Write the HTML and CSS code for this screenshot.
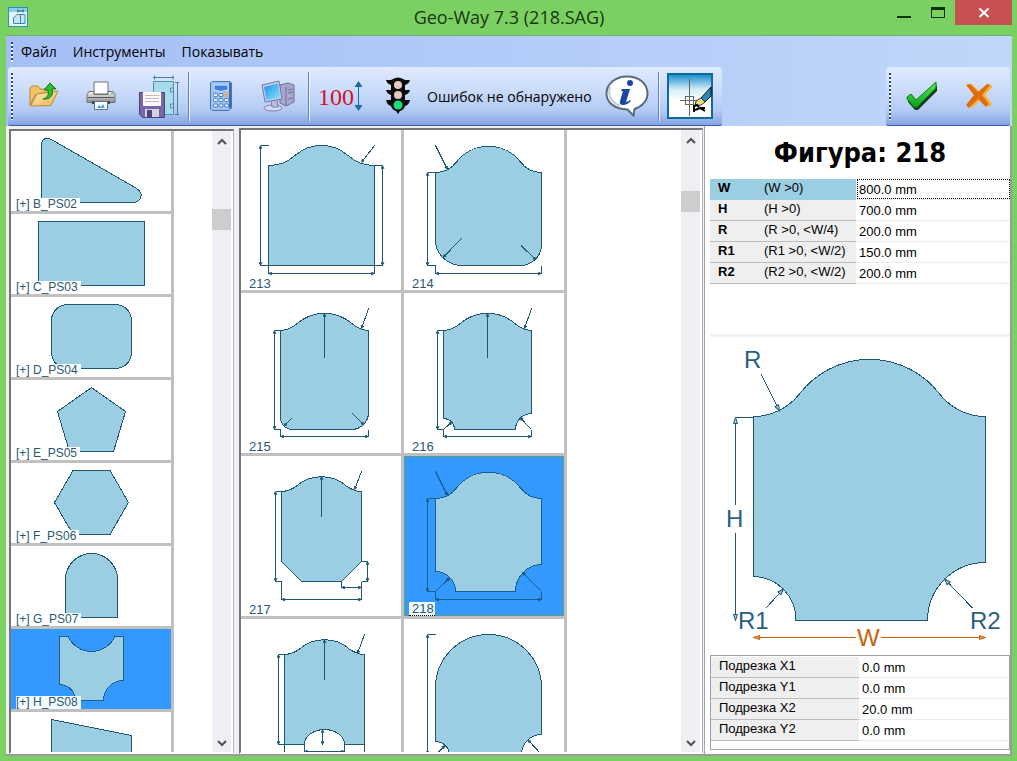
FILE: index.html
```html
<!DOCTYPE html>
<html lang="ru">
<head>
    <meta charset="UTF-8">
    <meta name="viewport" content="width=device-width, initial-scale=1.0">
    <title>Geo-Way 7.3 (218.SAG)</title>
    <link rel="stylesheet" href="styles.css">
</head>
<body>
    <svg class="defs" width="0" height="0" aria-hidden="true">
        <defs>
            <marker id="arrow" viewBox="0 0 6 6" refX="5" refY="3" markerWidth="4" markerHeight="4" markerUnits="userSpaceOnUse" orient="auto-start-reverse">
                <path d="M0 0L6 3L0 6Z" fill="#1f5873" stroke="none"/>
            </marker>
            <marker id="arrow-open" viewBox="0 0 8 6" refX="7" refY="3" markerWidth="8" markerHeight="6" markerUnits="userSpaceOnUse" orient="auto-start-reverse">
                <path d="M1 1L7 3L1 5Z" fill="#9bcde3" stroke="#1f5873"/>
            </marker>
            <marker id="arrow-orange" viewBox="0 0 8 6" refX="7" refY="3" markerWidth="8" markerHeight="6" markerUnits="userSpaceOnUse" orient="auto-start-reverse">
                <path d="M1 1L7 3L1 5Z" fill="#e79a55" stroke="#c8640f"/>
            </marker>
            <linearGradient id="folder" x1="0" y1="0" x2="1" y2="1">
                <stop offset="0" stop-color="#fff0b8"/>
                <stop offset="1" stop-color="#e9b04f"/>
            </linearGradient>
            <linearGradient id="screen" x1="0" y1="0" x2="1" y2="1">
                <stop offset="0" stop-color="#1f8fe8"/>
                <stop offset="1" stop-color="#8be4fb"/>
            </linearGradient>
            <linearGradient id="metal" x1="0" y1="0" x2="0" y2="1">
                <stop offset="0" stop-color="#f2f2f2"/>
                <stop offset="1" stop-color="#8d8d92"/>
            </linearGradient>
            <linearGradient id="sky" x1="0" y1="0" x2="0" y2="1">
                <stop offset="0" stop-color="#1089c8"/>
                <stop offset="0.35" stop-color="#d3edf8"/>
                <stop offset="0.6" stop-color="#ffffff"/>
            </linearGradient>
            <linearGradient id="green" x1="0" y1="0" x2="0" y2="1">
                <stop offset="0" stop-color="#5fe65a"/>
                <stop offset="1" stop-color="#09a21c"/>
            </linearGradient>
        </defs>
    </svg>

    <div class="window">
        <header class="titlebar">
            <svg class="app-icon" width="20" height="20" viewBox="0 0 20 20">
                <rect x="0.5" y="0.5" width="19" height="19" fill="#e3f5fc" stroke="#2a8fc4"/>
                <path d="M1 1h18v4H1z" fill="#8accea"/>
                <path d="M9 4h7M10 2.500v3M15 2.500v3" stroke="#2c6d94" fill="none"/>
                <path d="M5.500 16.500V11L9 7.500h8v9z" fill="#c4e7f5" stroke="#3f88ac"/>
                <path d="M12.500 8v8" fill="none" stroke="#3f88ac"/>
            </svg>
            <h1 class="title">Geo-Way 7.3 (218.SAG)</h1>
            <div class="window-buttons">
                <button class="win-btn" aria-label="Свернуть">
                    <svg width="16" height="14" viewBox="0 0 16 14"><path d="M1 11h14" stroke="#14300d" stroke-width="2"/></svg>
                </button>
                <button class="win-btn" aria-label="Развернуть">
                    <svg width="16" height="14" viewBox="0 0 16 14"><path d="M1 1h14v3H1z" fill="#14300d"/><rect x="1.500" y="1.500" width="13" height="10" fill="none" stroke="#14300d"/></svg>
                </button>
                <button class="win-btn close" aria-label="Закрыть">
                    <svg width="12" height="12" viewBox="0 0 12 12"><path d="M1.500 1.500l9 8.500M10.500 1.500l-9 8.500" stroke="#fff" stroke-width="2"/></svg>
                </button>
            </div>
        </header>

        <div class="client">
            <nav class="menubar">
                <span class="grip"></span>
                <button class="menu-item">Файл</button>
                <button class="menu-item">Инструменты</button>
                <button class="menu-item">Показывать</button>
            </nav>

            <div class="toolbars">
                <div class="toolbar">
                    <span class="grip"></span>
                    <button class="tool" aria-label="Открыть">
                        <svg width="32" height="28" viewBox="0 0 32 28">
                            <path d="M2 23V6l2-2h6l2 3h8v3l-13 3z" fill="#f0c367" stroke="#b98a35"/>
                            <path d="M2.500 24L9 12l21-3-7 14.500z" fill="url(#folder)" stroke="#bd8c37"/>
                            <path d="M15 17c5-1 6-5 5-9h-4l6-7 6 6h-4c2 6-2 11-9 10z" fill="#2ebd2b" stroke="#0f7a1d"/>
                        </svg>
                    </button>
                    <button class="tool" aria-label="Печать">
                        <svg width="32" height="30" viewBox="0 0 32 30">
                            <path d="M9 1h14v12H9z" fill="#fff" stroke="#777"/>
                            <path d="M4 10.500h5v3h14v-3h5l2 3v8H2v-8z" fill="url(#metal)" stroke="#6e6e76"/>
                            <path d="M3 16.500h26" stroke="#5a5a60"/>
                            <path d="M7 20h18v3H7z" fill="#44444c"/>
                            <path d="M9.500 20.500h13v8h-13z" fill="#fff" stroke="#5c7388"/>
                            <path d="M12 27l2-3 2 2 2-3 2 4z" fill="#4ea3dd"/>
                            <path d="M26 12.500h2" stroke="#3fae3f"/>
                        </svg>
                    </button>
                    <button class="tool" aria-label="Сохранить">
                        <svg width="42" height="44" viewBox="0 0 42 44">
                            <path d="M16.500 7.500h20v33h-20z" fill="#a9dcea" stroke="#4a94ae"/>
                            <path d="M36.500 14h-3v4h3M36.500 30h-3v4h3" fill="none" stroke="#4a94ae"/>
                            <path d="M16 3.500h21M17.500 1.500v4M36 1.500v4M40.500 8v32M38 8.500h4M38 40.500h4" stroke="#4b7e9b" fill="none"/>
                            <path d="M2.500 18.500h25v25h-22l-3-3z" fill="#7668a8" stroke="#4e417e"/>
                            <path d="M6 18h18v14H6z" fill="#fbf9fb"/>
                            <path d="M8 21.500h14M8 24.500h14M8 27.500h14" stroke="#cbb9b4"/>
                            <path d="M8 35h14v8H8z" fill="#d4d2dc"/>
                            <path d="M10 36h5v7h-5z" fill="#4e417e"/>
                        </svg>
                    </button>
                    <span class="sep"></span>
                    <button class="tool" aria-label="Калькулятор">
                        <svg width="24" height="32" viewBox="0 0 24 32">
                            <path d="M3 1.500h18l1.500 1.500v25L20 30.500H3L1.500 29V3z" fill="#9cc2f2" stroke="#4277be"/>
                            <path d="M21 2.500v26" stroke="#3c6bb0" stroke-width="2"/>
                            <path d="M5 5h14v5q-7 3-14 0z" fill="#3f81dc" stroke="#d8e9ff"/>
                            <g fill="#e6f1ff" stroke="#4c7ec4">
                                <rect x="4.500" y="13.500" width="4" height="3" rx="1"/><rect x="10" y="13.500" width="4" height="3" rx="1"/>
                                <rect x="4.500" y="18.500" width="4" height="3" rx="1"/><rect x="10" y="18.500" width="4" height="3" rx="1"/><rect x="15.500" y="18.500" width="4" height="3" rx="1"/>
                                <rect x="4.500" y="24" width="4" height="3" rx="1"/><rect x="10" y="24" width="4" height="3" rx="1"/><rect x="15.500" y="24" width="4" height="3" rx="1"/>
                            </g>
                            <rect x="15.500" y="13" width="4" height="4" rx="2" fill="#f2a65c"/>
                        </svg>
                    </button>
                    <button class="tool" aria-label="Компьютер">
                        <svg width="34" height="32" viewBox="0 0 34 32">
                            <path d="M19 5l8-2 6 2v17l-8 4-6-3z" fill="#a7a7cd" stroke="#6f6f9e"/>
                            <path d="M25 7v18M27 10l5-1M27 13l5-1M27 19l5-1" stroke="#6f6f9e"/>
                            <ellipse cx="12" cy="28" rx="9" ry="3" fill="#d6d8ec" stroke="#7f82ad"/>
                            <path d="M10 20l6-1 1 8h-6z" fill="#b9bcdc" stroke="#7f82ad"/>
                            <path d="M1 5l17-4 3 18-17 3z" fill="#c5cbe8" stroke="#6c78ab"/>
                            <path d="M3 7l14-3.500 2 14L5.500 20z" fill="url(#screen)"/>
                        </svg>
                    </button>
                    <span class="sep"></span>
                    <button class="tool" aria-label="Размеры">
                        <svg width="46" height="34" viewBox="0 0 46 34">
                            <text class="dim-number" x="0" y="26">100</text>
                            <path d="M40.500 6v22" stroke="#1470a0"/>
                            <path d="M40.500 2l4 6h-8zM40.500 32l4-6h-8z" fill="#1470a0"/>
                        </svg>
                    </button>
                    <button class="tool" aria-label="Проверка">
                        <svg width="26" height="38" viewBox="0 0 26 38">
                            <path d="M6 3q7-5 14 0h5q-1 4-5 5v5h5q-1 4-5 5v5h5q-1 5-5 6-1 4-5 5l-2 3-2-3q-4-1-5-5-4-1-5-6h5v-5q-4-1-5-5h5V8Q2 7 1 3z" fill="#0b0b0b"/>
                            <circle cx="13" cy="8" r="4" fill="#e5c9c5"/>
                            <circle cx="13" cy="18" r="4" fill="#e5c9c5"/>
                            <circle cx="13" cy="28" r="4.500" fill="#18e07d"/>
                        </svg>
                    </button>
                    <span class="status">Ошибок не обнаружено</span>
                    <button class="tool" aria-label="Информация">
                        <svg width="44" height="42" viewBox="0 0 44 42">
                            <path d="M22 1.500c12 0 20.500 7 20.500 17 0 7-5 13-13 15.500l-1 6.500-6-6C10 34 1.500 28 1.500 18.500S10 1.500 22 1.500z" fill="#fff" stroke="#5b6b7c" stroke-width="2"/>
                            <path d="M5 12q-4 13 10 19" fill="none" stroke="#c3ccd6" stroke-width="2"/>
                            <circle cx="25" cy="8" r="3" fill="#1d46a3"/>
                            <path d="M17 14h8l-4 13q2 0 4-2l1 1q-4 4-8 4t-3-4l3-10h-2z" fill="#1d46a3"/>
                        </svg>
                    </button>
                    <span class="sep"></span>
                    <button class="tool" aria-label="Чертёж">
                        <svg width="46" height="46" viewBox="0 0 46 46">
                            <rect x="1" y="1" width="44" height="44" fill="url(#sky)" stroke="#0f6a9c" stroke-width="2"/>
                            <path d="M22.500 6v37M13 27.500h18" stroke="#666" fill="none"/>
                            <rect x="18.500" y="23.500" width="8" height="8" fill="none" stroke="#666"/>
                            <path d="M44 14v9l-6 6-4-4z" fill="#2e86ba" stroke="#111"/>
                            <path d="M34 25l4 4-4 3-6 1 1-5z" fill="#eee17a" stroke="#333"/>
                            <path d="M27 32v7M27 33l3-1 2 2M28 37l5-2 5 3M33 35l5 0" stroke="#000" stroke-width="2" fill="none"/>
                        </svg>
                    </button>
                </div>
                <div class="toolbar confirm">
                    <span class="grip"></span>
                    <button class="tool" aria-label="Принять">
                        <svg width="34" height="30" viewBox="0 0 34 30">
                            <path d="M3 18l4-3 5 6L32 4v6L13 29h-3l-7-8z" fill="#123f1c"/>
                            <path d="M2 16l4-3 5 6L31 1v6L12 26H9l-7-8z" fill="url(#green)" stroke="#067f18"/>
                        </svg>
                    </button>
                    <button class="tool" aria-label="Отмена">
                        <svg width="30" height="28" viewBox="0 0 30 28">
                            <path d="M4 3l4-1 8 8 9-8 4 2-8 9 7 9-3 3-8-8-9 9-3-3 8-10z" fill="#f8b32c"/>
                            <path d="M2 3l4-1 8 8 9-8 3 1-8 10 7 9-3 3-8-8-9 9-3-3 8-10z" fill="#e06d0c"/>
                        </svg>
                    </button>
                </div>
            </div>

            <main class="main">
                <section class="list categories" aria-label="Группы фигур">
                    <div class="cells">
                        <button class="cell">
                            <svg class="shape" viewBox="0 0 160 80"><path d="M30.500 71.500V13Q31 7 37 7.500Q40 8 44 10.500L125 57Q131 61 130 66Q128 71.500 122 71.500Z"/></svg>
                            <span class="tag">[+] B_PS02</span>
                        </button>
                        <button class="cell">
                            <svg class="shape" viewBox="0 0 160 80"><rect x="27.500" y="7.500" width="106" height="64"/></svg>
                            <span class="tag">[+] C_PS03</span>
                        </button>
                        <button class="cell">
                            <svg class="shape" viewBox="0 0 160 80"><rect x="40.500" y="7.500" width="80" height="64" rx="16"/></svg>
                            <span class="tag">[+] D_PS04</span>
                        </button>
                        <button class="cell">
                            <svg class="shape" viewBox="0 0 160 80"><path d="M80.500 7.500L114.500 31.500L102.500 71.500H58.500L46.500 31.500Z"/></svg>
                            <span class="tag">[+] E_PS05</span>
                        </button>
                        <button class="cell">
                            <svg class="shape" viewBox="0 0 160 80"><path d="M43.500 39.500L62 7.500H99L117.500 39.500L99 71.500H62Z"/></svg>
                            <span class="tag">[+] F_PS06</span>
                        </button>
                        <button class="cell">
                            <svg class="shape" viewBox="0 0 160 80"><path d="M54.500 71.500V33.500A26 26 0 0 1 106.500 33.500V71.500Z"/></svg>
                            <span class="tag">[+] G_PS07</span>
                        </button>
                        <button class="cell selected">
                            <svg class="shape" viewBox="0 0 160 80"><path d="M48.500 7.500H57A26 26 0 0 0 104 7.500H112.500V51.500A20 20 0 0 0 92.500 71.500H64.500A16 16 0 0 0 48.500 55.500Z"/></svg>
                            <span class="tag">[+] H_PS08</span>
                        </button>
                        <button class="cell" aria-label="I_PS09">
                            <svg class="shape" viewBox="0 0 160 80"><path d="M40.500 7.500L120.500 23.500V71.500H40.500Z"/></svg>
                        </button>
                    </div>
                    <div class="scrollbar">
                        <svg class="chevron" viewBox="0 0 10 7"><path d="M1 6l4-4 4 4"/></svg>
                        <span class="thumb"></span>
                        <svg class="chevron down" viewBox="0 0 10 7"><path d="M1 1l4 4 4-4"/></svg>
                    </div>
                </section>

                <section class="list figures" aria-label="Фигуры">
                    <div class="cells">
                        <button class="cell">
                            <svg class="shape" viewBox="0 0 160 160">
                                <path d="M27.500 35.500A40 40 0 0 0 54 25.500A40 40 0 0 1 107 25.500A40 40 0 0 0 133.500 35.500V135.500H27.500Z"/>
                                <path class="line" d="M27.500 15.500H19.500M19.500 135.500H141.500M133.500 35.500H141.500M27.500 135.500V143.500M133.500 135.500V143.500"/>
                                <path class="dim" d="M19.500 15.500V135.500"/>
                                <path class="dim" d="M141.500 35.500V135.500"/>
                                <path class="dim" d="M27.500 143.500H133.500"/>
                                <path class="leader" d="M133.500 15.500L120.500 32.500"/>
                            </svg>
                            <span class="tag">213</span>
                        </button>
                        <button class="cell">
                            <svg class="shape" viewBox="0 0 160 160">
                                <path d="M31.500 42.500A26.500 26.500 0 0 0 52.500 32A40.400 40.400 0 0 1 116.500 32A26.500 26.500 0 0 0 137.500 42.500V114.500A21 21 0 0 1 116.500 135.500H58.500A27 25 0 0 1 31.500 110.500Z"/>
                                <path class="line" d="M31.500 42.500H23.500M31.500 135.500H23.500M31.500 135.500V143.500M137.500 135.500V143.500"/>
                                <path class="dim" d="M23.500 42.500V135.500"/>
                                <path class="dim" d="M31.500 143.500H137.500"/>
                                <path class="leader" d="M31.500 15.500L43.500 39.500"/>
                                <path class="leader" d="M58 108L39 127.500"/>
                                <path class="leader" d="M117 115.500L132 130"/>
                            </svg>
                            <span class="tag">214</span>
                        </button>
                        <button class="cell">
                            <svg class="shape" viewBox="0 0 160 160">
                                <path d="M39.500 37.500A27 27 0 0 0 55 31.500A42 42 0 0 1 112 31.500A27 27 0 0 0 127.500 37.500V119.500A17 17 0 0 1 110.500 136.500H51.500A12 12 0 0 1 39.500 124.500Z"/>
                                <path class="line" d="M39.500 37.500H33.500M39.500 136.500H33.500M39.500 136.500V143.500M127.500 136.500V143.500"/>
                                <path class="dim" d="M33.500 37.500V136.500"/>
                                <path class="dim" d="M39.500 143.500H127.500"/>
                                <path class="leader" d="M83.500 65V20.500"/>
                                <path class="leader" d="M127.500 15.500L120.500 35.500"/>
                                <path class="leader" d="M51 125L43 133"/>
                                <path class="leader" d="M111 120L123 132"/>
                            </svg>
                            <span class="tag">215</span>
                        </button>
                        <button class="cell">
                            <svg class="shape" viewBox="0 0 160 160">
                                <path d="M39.500 37.500A27 27 0 0 0 55 31.500A42 42 0 0 1 112 31.500A27 27 0 0 0 127.500 37.500V120.500A16 16 0 0 0 111.500 136.500H50.500A11 11 0 0 0 39.500 125.500Z"/>
                                <path class="line" d="M39.500 37.500H33.500M39.500 136.500H33.500M39.500 136.500V143.500M127.500 136.500V143.500"/>
                                <path class="dim" d="M33.500 37.500V136.500"/>
                                <path class="dim" d="M39.500 143.500H127.500"/>
                                <path class="leader" d="M83.500 65V20.500"/>
                                <path class="leader" d="M127.500 15.500L120.500 35.500"/>
                                <path class="leader" d="M39.500 136.500L48 129"/>
                                <path class="leader" d="M127.500 136.500L116 124.500"/>
                            </svg>
                            <span class="tag">216</span>
                        </button>
                        <button class="cell">
                            <svg class="shape" viewBox="0 0 160 160">
                                <path d="M40.500 35.500A27 27 0 0 0 55 30.500A38 38 0 0 1 106 30.500A27 27 0 0 0 120.500 35.500V105.500L100.500 125.500H60.500L40.500 105.500Z"/>
                                <path class="line" d="M40.500 35.500H34.500M40.500 125.500H34.500M40.500 125.500V143.500M120.500 125.500V143.500M120.500 105.500H126.500M120.500 125.500H126.500M100.500 125.500V131.500"/>
                                <path class="dim" d="M34.500 35.500V125.500"/>
                                <path class="dim" d="M40.500 143.500H120.500"/>
                                <path class="dim" d="M126.500 105.500V125.500"/>
                                <path class="dim" d="M100.500 131.500H120.500"/>
                                <path class="leader" d="M80.500 61V20.500"/>
                                <path class="leader" d="M120.500 15.500L113.500 33.500"/>
                            </svg>
                            <span class="tag">217</span>
                        </button>
                        <button class="cell selected">
                            <svg class="shape" viewBox="0 0 160 160">
                                <path d="M31.500 42.500A26.500 26.500 0 0 0 52.500 32A40.400 40.400 0 0 1 116.500 32A26.500 26.500 0 0 0 137.500 42.500V108.500A26.500 27 0 0 0 111.500 135.500H51.500A20 20 0 0 0 31.500 115.500Z"/>
                                <path class="line" d="M31.500 42.500H23.500M31.500 135.500H23.500M31.500 135.500V143.500M137.500 135.500V143.500"/>
                                <path class="dim" d="M23.500 42.500V135.500"/>
                                <path class="dim" d="M31.500 143.500H137.500"/>
                                <path class="leader" d="M31.500 15.500L43.500 39.500"/>
                                <path class="leader" d="M31.500 135.500L45.500 122"/>
                                <path class="leader" d="M137.500 135.500L118.500 116.500"/>
                            </svg>
                            <span class="tag">218</span>
                        </button>
                        <button class="cell" aria-label="219">
                            <svg class="shape" viewBox="0 0 160 160">
                                <path d="M43.500 35.500A27 27 0 0 0 58 30.500A38 38 0 0 1 109 30.500A27 27 0 0 0 123.500 35.500V125.500H103.500A20 15 0 0 0 63.500 125.500H43.500Z"/>
                                <path class="line" d="M43.500 35.500H37.500M43.500 125.500H37.500M43.500 125.500V150M123.500 125.500V150M63.500 125.500V133.500M103.500 125.500V133.500"/>
                                <path class="dim" d="M37.500 35.500V125.500"/>
                                <path class="dim" d="M81.500 110.500V125.500"/>
                                <path class="dim" d="M63.500 132.500H103.500"/>
                                <path class="leader" d="M83.500 61V20.500"/>
                                <path class="leader" d="M123.500 15.500L116.500 34.500"/>
                            </svg>
                        </button>
                        <button class="cell" aria-label="220">
                            <svg class="shape" viewBox="0 0 160 160">
                                <path d="M31.500 68.500A53 53 0 0 1 137.500 68.500V115.500A20 20 0 0 0 117.500 135.500H45.500A14 14 0 0 0 31.500 122.500Z"/>
                                <path class="line" d="M31.500 15.500H23.500"/>
                                <path class="dim" d="M23.500 15.500V135.500"/>
                                <path class="leader" d="M32 135.500L41 126.500"/>
                                <path class="leader" d="M137.500 135.500L124 121"/>
                            </svg>
                        </button>
                    </div>
                    <div class="scrollbar">
                        <svg class="chevron" viewBox="0 0 10 7"><path d="M1 6l4-4 4 4"/></svg>
                        <span class="thumb"></span>
                        <svg class="chevron down" viewBox="0 0 10 7"><path d="M1 1l4 4 4-4"/></svg>
                    </div>
                </section>

                <section class="details">
                    <h2 class="heading">Фигура: 218</h2>
                    <div class="params">
                        <table class="grid">
                            <tr class="active">
                                <th><label for="w">W</label></th><td class="range">(W &gt;0)</td>
                                <td class="value"><input id="w" type="text" value="800.0 mm"></td>
                            </tr>
                            <tr>
                                <th><label for="h">H</label></th><td class="range">(H &gt;0)</td>
                                <td class="value"><input id="h" type="text" value="700.0 mm"></td>
                            </tr>
                            <tr>
                                <th><label for="r">R</label></th><td class="range">(R &gt;0, &lt;W/4)</td>
                                <td class="value"><input id="r" type="text" value="200.0 mm"></td>
                            </tr>
                            <tr>
                                <th><label for="r1">R1</label></th><td class="range">(R1 &gt;0, &lt;W/2)</td>
                                <td class="value"><input id="r1" type="text" value="150.0 mm"></td>
                            </tr>
                            <tr>
                                <th><label for="r2">R2</label></th><td class="range">(R2 &gt;0, &lt;W/2)</td>
                                <td class="value"><input id="r2" type="text" value="200.0 mm"></td>
                            </tr>
                        </table>
                    </div>
                    <div class="preview">
                        <svg class="shape drawing" viewBox="0 0 300 318">
                            <path d="M43.500 79.500A58 58 0 0 0 89.400 56.900A88.500 88.500 0 0 1 229.600 56.900A58 58 0 0 0 275.500 79.500V225.500A58 58 0 0 0 217.500 283.500H86A43.500 43.500 0 0 0 43.500 239.500Z"/>
                            <path class="line" d="M25.500 80.500H43.500"/>
                            <path class="arrow-start" d="M25.500 80.500V168"/>
                            <path class="arrow-end" d="M25.500 196V283.500"/>
                            <path class="arrow-end" d="M51 37L69.500 74"/>
                            <path class="arrow-end" d="M56 271L73.500 252"/>
                            <path class="arrow-end" d="M262.500 271L234.500 242"/>
                            <path class="width start" d="M43.500 300.500H146"/>
                            <path class="width end" d="M171 300.500H275.500"/>
                            <text x="34" y="31">R</text>
                            <text x="16" y="190">H</text>
                            <text x="28" y="292">R1</text>
                            <text x="260" y="292">R2</text>
                            <text class="orange" x="147" y="309">W</text>
                        </svg>
                    </div>
                    <div class="trims">
                        <table class="grid">
                            <tr>
                                <th><label for="x1">Подрезка X1</label></th>
                                <td class="value"><input id="x1" type="text" value="0.0 mm"></td>
                            </tr>
                            <tr>
                                <th><label for="y1">Подрезка Y1</label></th>
                                <td class="value"><input id="y1" type="text" value="0.0 mm"></td>
                            </tr>
                            <tr>
                                <th><label for="x2">Подрезка X2</label></th>
                                <td class="value"><input id="x2" type="text" value="20.0 mm"></td>
                            </tr>
                            <tr>
                                <th><label for="y2">Подрезка Y2</label></th>
                                <td class="value"><input id="y2" type="text" value="0.0 mm"></td>
                            </tr>
                        </table>
                    </div>
                </section>
            </main>
        </div>
    </div>
</body>
</html>
```
FILE: styles.css
```css
* {
    box-sizing: border-box;
}
body {
    margin: 0;
    font-family: "Liberation Sans", Arial, sans-serif;
    font-size: 13px;
    color: #000;
}
button {
    border: 0;
    padding: 0;
    background: none;
    font: inherit;
    color: inherit;
}
.defs {
    position: absolute;
}
.window {
    display: flex;
    flex-direction: column;
    height: 100vh;
    padding: 0 5px 5px 6px;
    background-color: #7bd062;
    overflow: hidden;
}

/* title bar */
.titlebar {
    display: grid;
    grid-template-columns: 1fr auto 1fr;
    flex: none;
    height: 35px;
}
.app-icon {
    margin: 7px 2px;
}
.title {
    margin: 0;
    font-family: "Open Sans", "Noto Sans", sans-serif;
    font-size: 18px;
    font-weight: 400;
    line-height: 35px;
    color: #17380e;
}
.window-buttons {
    display: flex;
    justify-content: flex-end;
}
.win-btn {
    display: flex;
    align-items: center;
    justify-content: center;
    width: 34px;
    height: 25px;
}
.win-btn.close {
    width: 57px;
    background-color: #c75050;
}

/* menu and toolbars */
.client {
    display: flex;
    flex-direction: column;
    flex: 1;
    min-height: 0;
    border-top: 1px solid #6fae7c;
    background: linear-gradient(to right, #a5bff6, #c0d7fa);
}
.menubar {
    display: flex;
    align-items: center;
    flex: none;
    height: 31px;
    padding-left: 5px;
    font-family: "Open Sans", "Noto Sans", sans-serif;
    font-size: 14px;
}
.menu-item {
    padding: 0 8px;
}
.grip {
    flex: none;
    width: 2px;
    height: 20px;
    background: repeating-linear-gradient(to bottom, #27408b 0 2px, #f4f8ff 2px 4px);
}
.toolbars {
    display: flex;
    justify-content: space-between;
    flex: none;
    padding: 0 2px;
}
.toolbar {
    display: flex;
    align-items: center;
    height: 59px;
    padding: 0 3px;
    border-bottom: 1px solid #3a5ca8;
    border-radius: 4px 4px 2px 2px;
    background: linear-gradient(to bottom, #dfeafd 0%, #cbdcfa 40%, #b2caf4 75%, #85a4e2 100%);
}
.toolbar .grip {
    height: 47px;
    margin-right: 2px;
}
.tool {
    display: flex;
    align-items: center;
    justify-content: center;
    width: 57px;
    height: 56px;
}
.sep {
    width: 2px;
    height: 49px;
    margin: 0 2px;
    border-left: 1px solid #6283c4;
    border-right: 1px solid #eef4ff;
}
.status {
    padding: 0 7px 0 1px;
    font-family: "Open Sans", "Noto Sans", sans-serif;
    font-size: 14px;
    white-space: nowrap;
}
.dim-number {
    font-family: "Liberation Serif", "Times New Roman", serif;
    font-size: 24px;
    fill: #d3122e;
}

/* lists of figures */
.main {
    display: grid;
    grid-template-columns: 229px 1fr 306px;
    flex: 1;
    min-height: 0;
    background-color: #f0f0f2;
    border: solid #9a9aa0;
    border-width: 0 2px 2px 0;
}
.list {
    display: flex;
    justify-content: space-between;
    min-height: 0;
    overflow: hidden;
    border: 2px solid #76767a;
    border-right: 1px solid #b4b4b8;
    border-bottom-color: #fff;
    background-color: #fff;
}
.categories {
    margin: 3px 1px 0 3px;
}
.figures {
    margin: 2px 1px 0 4px;
}
.cells {
    display: grid;
    align-content: start;
    gap: 3px;
    padding-right: 3px;
    background-color: #c0c0c0;
}
.categories .cells {
    grid-template-columns: 160px;
    grid-auto-rows: 80px;
}
.figures .cells {
    grid-template-columns: 160px 160px;
    grid-auto-rows: 160px;
}
.cell {
    display: grid;
    position: relative;
    background-color: #fff;
}
.tag {
    position: absolute;
    left: 5px;
    bottom: 0;
    padding: 0 3px 0 0;
    background-color: #fff;
    color: #2a5872;
    font-size: 12px;
    line-height: 13px;
}
.figures .tag {
    padding: 0 1px 0 3px;
    font-size: 13px;
}
.selected {
    background-color: #3399ff;
}
.figures .selected {
    outline: 2px dotted #5f9c8a;
    outline-offset: -2px;
}
.selected .tag {
    background-color: #f2fbff;
}
.figures .selected .tag {
    border-bottom: 1px dotted #000;
}
.shape {
    width: 100%;
    fill: #9bcde3;
    stroke: #1f5873;
    shape-rendering: crispEdges;
}
.selected .shape {
    stroke: #175e93;
}
.line, .dim, .leader {
    fill: none;
}
.dim {
    marker-start: url(#arrow);
    marker-end: url(#arrow);
}
.leader {
    marker-end: url(#arrow);
}
.scrollbar {
    display: flex;
    flex-direction: column;
    align-items: center;
    width: 19px;
    margin-right: 2px;
    padding: 7px 0 5px;
    background-color: #efeff3;
}
.chevron {
    width: 10px;
    height: 7px;
    fill: none;
    stroke: #505055;
    stroke-width: 2;
}
.chevron.down {
    margin-top: auto;
}
.thumb {
    width: 19px;
    height: 21px;
    margin-top: 64px;
    background-color: #cdcdcf;
}
.figures .thumb {
    margin-top: 47px;
}

/* right panel */
.details {
    display: flex;
    flex-direction: column;
    min-width: 0;
    padding: 0 0 4px 5px;
    border-left: 1px solid #a4a4a8;
    background-color: #fff;
}
.heading {
    margin: 0;
    font-family: "DejaVu Sans Condensed", "DejaVu Sans", sans-serif;
    font-size: 27px;
    line-height: 53px;
    text-align: center;
}
.params {
    flex: none;
    height: 158px;
    border-bottom: 3px solid #f0f0f2;
}
.grid {
    width: 100%;
    border-spacing: 0;
    table-layout: fixed;
}
.grid tr {
    height: 21px;
}
.grid th, .grid td {
    padding: 0;
    text-align: left;
    line-height: 18px;
    vertical-align: top;
    border-bottom: 1px solid #bdbdc0;
    background-color: #efeff0;
    white-space: nowrap;
}
.grid th {
    width: 54px;
    padding-left: 8px;
}
.grid .range {
    width: 92px;
}
.grid .value {
    padding-left: 1px;
    border-bottom-color: #ececee;
    background-color: #fff;
}
.grid .active th, .grid .active .range {
    background-color: #9bcde3;
    border-bottom-color: #9bcde3;
}
.grid input {
    display: block;
    width: 100%;
    height: 20px;
    padding: 1px 0 0 1px;
    border: 1px solid transparent;
    background: none;
    font: inherit;
    line-height: 18px;
}
.grid .active input {
    border: 1px dotted #000;
}
.preview {
    display: flex;
    flex: 1;
    min-height: 0;
}
.drawing text {
    fill: #2a6080;
    stroke: none;
    font-size: 24px;
}
.arrow-start, .arrow-end, .width {
    fill: none;
}
.arrow-start {
    marker-start: url(#arrow-open);
}
.arrow-end {
    marker-end: url(#arrow-open);
}
.width {
    stroke: #c8640f;
}
.width.start {
    marker-start: url(#arrow-orange);
}
.width.end {
    marker-end: url(#arrow-orange);
}
.drawing .orange {
    fill: #c8640f;
}
.trims {
    flex: none;
    height: 95px;
    padding-top: 1px;
    border: 1px solid #a0a0a6;
}
.trims .grid th {
    width: 148px;
    font-weight: 400;
}
```
